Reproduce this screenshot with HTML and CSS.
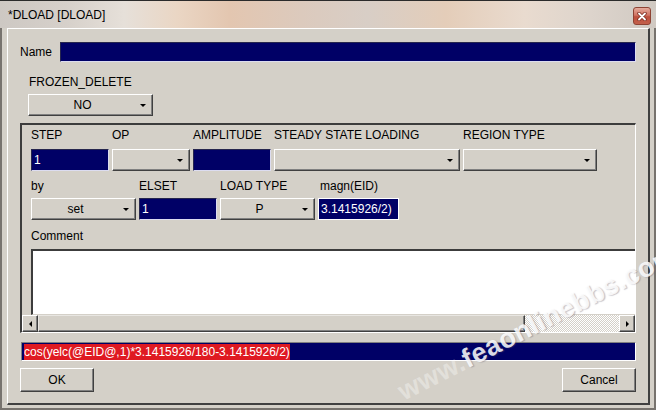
FILE: index.html
```html
<!DOCTYPE html>
<html>
<head>
<meta charset="utf-8">
<link rel="stylesheet" href="styles.css">
</head>
<body>
<div class="window">
  <div class="titlebar">
    <span class="title">*DLOAD [DLOAD]</span>
    <span class="close">
      <svg width="10" height="9" viewBox="0 0 10 9">
        <path d="M2 1.5 L8 7.5 M8 1.5 L2 7.5" stroke="#7a2a1e" stroke-width="3.4" stroke-linecap="round"/>
        <path d="M2 1.5 L8 7.5 M8 1.5 L2 7.5" stroke="#ffffff" stroke-width="1.8" stroke-linecap="round"/>
      </svg>
    </span>
  </div>
  <div class="frame">
    <div class="panel">
      <div class="name-row">
        <span class="name-label">Name</span>
        <div class="nav name-field"></div>
      </div>
      <div class="frozen-label">FROZEN_DELETE</div>
      <div class="combo no-combo"><span class="combo-text">NO</span><i class="arrow"></i></div>

      <div class="group">
        <div class="viewport">
          <div class="fields row1">
            <span class="lbl">STEP</span>
            <span class="lbl">OP</span>
            <span class="lbl">AMPLITUDE</span>
            <span class="lbl">STEADY STATE LOADING</span>
            <span class="lbl">REGION TYPE</span>
            <div class="nav">1</div>
            <div class="combo"><span class="combo-text"></span><i class="arrow"></i></div>
            <div class="nav"></div>
            <div class="combo"><span class="combo-text"></span><i class="arrow"></i></div>
            <div class="combo"><span class="combo-text"></span><i class="arrow"></i></div>
          </div>
          <div class="fields row2">
            <span class="lbl">by</span>
            <span class="lbl">ELSET</span>
            <span class="lbl">LOAD TYPE</span>
            <span class="lbl lbl-magn">magn(EID)</span>
            <div class="combo"><span class="combo-text">set</span><i class="arrow"></i></div>
            <div class="nav">1</div>
            <div class="combo"><span class="combo-text">P</span><i class="arrow"></i></div>
            <div class="nav nav-focus">3.1415926/2)</div>
          </div>
          <div class="comment-label">Comment</div>
          <div class="textarea"></div>
        </div>
        <div class="hscroll">
          <div class="sb-btn"><i class="tri-left"></i></div>
          <div class="sb-thumb"></div>
          <div class="sb-track"></div>
          <div class="sb-btn"><i class="tri-right"></i></div>
        </div>
      </div>

      <div class="formula"><span class="sel">cos(yelc(@EID@,1)*3.1415926/180-3.1415926/2)</span></div>

      <div class="buttons">
        <button class="btn">OK</button>
        <button class="btn">Cancel</button>
      </div>
    </div>
  </div>
  <div class="watermark"><span class="wm-faint">www.</span>feaonlinebbs.com</div>
</div>
</body>
</html>
```
FILE: styles.css
```css
body {
  margin: 0;
  width: 656px;
  height: 410px;
  overflow: hidden;
  background: #d4d0c8;
  font-family: "Liberation Sans", Arial, sans-serif;
  font-size: 12px;
  color: #000;
}

.window {
  position: relative;
  width: 656px;
  height: 410px;
  display: flex;
  flex-direction: column;
  overflow: hidden;
  background: #d4d0c8;
}

.titlebar {
  height: 28px;
  box-sizing: border-box;
  border-top: 1px solid #2b2b2b;
  display: flex;
  align-items: flex-start;
  justify-content: space-between;
  padding: 7px 5px 0 8px;
  background: linear-gradient(90deg, #cdc8c3 0%, #d6d0ca 10%, #e6e0d9 19%, #ead6c4 27%, #e3c6b0 35%, #dccabd 46%, #d8cec6 56%, #e4cdb9 68%, #e9dbcf 80%, #ddd4cc 90%, #d0c9c2 100%);
}

.title {
  line-height: 14px;
}

.close {
  width: 18px;
  height: 18px;
  margin-top: -1px;
  box-sizing: border-box;
  border: 1px solid #8e4334;
  border-radius: 3px;
  background: linear-gradient(#e5ab9c, #d07463 45%, #bd4f3c 55%, #c3604c);
  display: flex;
  align-items: center;
  justify-content: center;
}

.frame {
  flex: 1;
  display: flex;
  min-height: 0;
  min-width: 0;
  overflow: hidden;
  border-left: 2px solid #77736e;
  border-right: 2px solid #77736e;
  border-bottom: 2px solid #77736e;
  padding: 0 4px 3px 5px;
}

.panel {
  flex: 1;
  min-width: 0;
  display: flex;
  flex-direction: column;
  align-items: flex-start;
  border-style: solid;
  border-width: 1px 2px 2px 1px;
  border-color: #ffffff #404040 #404040 #ffffff;
  padding: 0 12px;
}

.name-row {
  align-self: stretch;
  display: flex;
  align-items: center;
  margin-top: 13px;
  height: 20px;
}

.name-label {
  width: 40px;
}

.name-field {
  flex: 1;
  height: 20px;
}

.nav {
  box-sizing: border-box;
  background: #000066;
  border: 1px solid;
  border-color: #26264e #dcdcf0 #dcdcf0 #26264e;
  color: #fff;
  padding-left: 2px;
  display: flex;
  align-items: center;
  white-space: nowrap;
  overflow: hidden;
}

.nav-focus {
  border-color: #ffffff;
}

.frozen-label {
  margin: 13px 0 0 9px;
  line-height: 14px;
}

.combo {
  box-sizing: border-box;
  height: 22px;
  background: #d4d0c8;
  border: 1px solid;
  border-color: #ffffff #404040 #404040 #ffffff;
  box-shadow: inset -1px -1px 0 #808080;
  display: flex;
  align-items: center;
}

.combo-text {
  flex: 1;
  text-align: center;
}

.arrow {
  width: 0;
  height: 0;
  margin: 1px 6px 0 4px;
  border-left: 3px solid transparent;
  border-right: 3px solid transparent;
  border-top: 3px solid #000;
}

.no-combo {
  width: 125px;
  margin: 5px 0 0 8px;
}

.group {
  width: 616px;
  min-width: 0;
  margin-top: 7px;
  height: 210px;
  box-sizing: border-box;
  overflow: hidden;
  border-style: solid;
  border-width: 2px 1px 1px 2px;
  border-color: #3c3c3c #ffffff #ffffff #3c3c3c;
  display: flex;
  flex-direction: column;
}

.viewport {
  height: 190px;
  min-width: 0;
  box-sizing: border-box;
  overflow: hidden;
  padding: 3px 0 0 9px;
}

.fields {
  display: grid;
  grid-auto-flow: row;
  column-gap: 3px;
}

.row1 {
  grid-template-columns: 78px 78px 78px 186px 134px;
  grid-template-rows: 14px 22px;
  row-gap: 7px;
}

.row2 {
  margin-top: 8px;
  grid-template-columns: 105px 78px 95px 81px;
  grid-template-rows: 14px 22px;
  row-gap: 5px;
}

.lbl {
  line-height: 14px;
  white-space: nowrap;
}

.lbl-magn {
  padding-left: 2px;
}

.comment-label {
  margin-top: 9px;
  line-height: 14px;
}

.textarea {
  margin-top: 6px;
  width: 640px;
  height: 66px;
  box-sizing: border-box;
  background: #fff;
  border-style: solid;
  border-width: 2px 0 1px 2px;
  border-color: #3c3c3c #ffffff #d4d0c8 #3c3c3c;
}

.hscroll {
  height: 17px;
  flex: none;
  display: flex;
}

.sb-btn {
  width: 16px;
  flex: none;
  height: 17px;
  box-sizing: border-box;
  background: #d4d0c8;
  border: 1px solid;
  border-color: #ffffff #404040 #404040 #ffffff;
  box-shadow: inset -1px -1px 0 #808080;
  display: flex;
  align-items: center;
  justify-content: center;
}

.sb-thumb {
  width: 487px;
  flex: none;
  height: 17px;
  box-sizing: border-box;
  background: #d4d0c8;
  border: 1px solid;
  border-color: #e8e6e2 #404040 #404040 #e8e6e2;
  box-shadow: inset -1px -1px 0 #808080;
}

.sb-track {
  flex: 1;
  background: repeating-conic-gradient(#d4d0c8 0 25%, #ffffff 0 50%) 0 0 / 2px 2px;
}

.tri-left {
  width: 0;
  height: 0;
  border-top: 3px solid transparent;
  border-bottom: 3px solid transparent;
  border-right: 3px solid #000;
}

.tri-right {
  width: 0;
  height: 0;
  border-top: 3px solid transparent;
  border-bottom: 3px solid transparent;
  border-left: 3px solid #000;
}

.formula {
  align-self: stretch;
  margin: 9px 0 0 1px;
  height: 19px;
  box-sizing: border-box;
  background: #000066;
  border: 1px solid;
  border-color: #808080 #ffffff #ffffff #808080;
  padding-left: 2px;
  display: flex;
  align-items: center;
}

.sel {
  background: #df1a22;
  color: #fff;
  line-height: 16px;
  white-space: nowrap;
}

.buttons {
  align-self: stretch;
  margin-top: 7px;
  display: flex;
  justify-content: space-between;
}

.btn {
  width: 74px;
  height: 24px;
  box-sizing: border-box;
  padding: 0;
  font: inherit;
  color: #000;
  background: #d4d0c8;
  border: 1px solid;
  border-color: #ffffff #404040 #404040 #ffffff;
  box-shadow: inset -1px -1px 0 #808080;
}

.watermark {
  position: absolute;
  left: 400px;
  top: 378px;
  transform: rotate(-27deg);
  transform-origin: 0 50%;
  font-family: "Liberation Sans", Arial, sans-serif;
  font-weight: bold;
  font-size: 27px;
  letter-spacing: 0.5px;
  color: rgba(255, 255, 255, 0.85);
  text-shadow: 1px 1px 1px rgba(90, 90, 110, 0.35);
  white-space: nowrap;
  pointer-events: none;
}

.wm-faint {
  color: rgba(255, 255, 255, 0.35);
  text-shadow: none;
}
```
